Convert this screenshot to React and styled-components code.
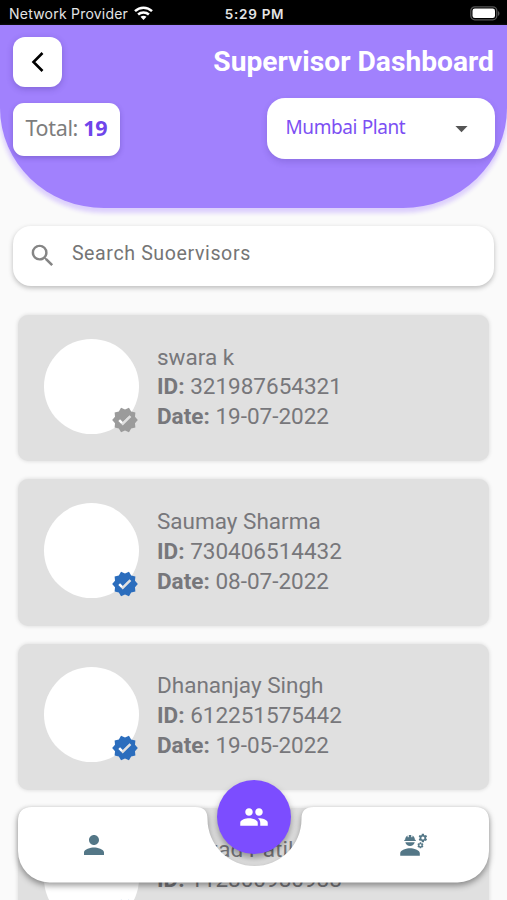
import React from 'react';
import styled, { createGlobalStyle } from 'styled-components';
import { MdVerified, MdPerson, MdPeople, MdEngineering, MdSearch, MdArrowDropDown } from 'react-icons/md';

const GlobalStyle = createGlobalStyle`
    * {
        box-sizing: border-box;
    }

    body {
        margin: 0;
        background: #fafafa;
    }
`;

const Screen = styled.div`
    position: relative;
    width: 507px;
    height: 900px;
    overflow: hidden;
    background: #fafafa;
    color: #77777b;
    font-family: Roboto, sans-serif;
`;

const StatusBar = styled.div`
    display: grid;
    grid-template-columns: 1fr auto 1fr;
    align-items: center;
    height: 25px;
    padding: 2px 7px 0 9px;
    background: black;
    color: #e4e4e4;
    font: 14px/20px Inter, sans-serif;
`;

const Carrier = styled.div`
    display: flex;
    align-items: center;
    gap: 6px;
    letter-spacing: .22px;
    white-space: nowrap;
`;

const Clock = styled.div`
    font-size: 13.5px;
    font-weight: 600;
    letter-spacing: .75px;
`;

const Battery = styled.svg`
    justify-self: end;
`;

const Header = styled.header`
    display: flex;
    flex-direction: column;
    gap: 11px;
    height: 183px;
    padding: 12px 13px 0;
    border-radius: 0 0 104px 104px / 0 0 100px 100px;
    background: #a181fd;
    box-shadow: 0 4px 4px 1px #dccffc;
`;

const HeaderRow = styled.div`
    display: flex;
    justify-content: space-between;
    align-items: ${props => props.$align || 'center'};
`;

const BackButton = styled.button`
    display: flex;
    align-items: center;
    justify-content: center;
    width: 49px;
    height: 50px;
    padding: 0;
    border: none;
    border-radius: 12px;
    background: white;
    box-shadow: 0 2px 6px rgba(60, 40, 130, .3);
`;

const Title = styled.h1`
    margin: 0;
    color: white;
    font-size: 28.2px;
    font-weight: 700;
    line-height: 48px;
    white-space: nowrap;
`;

const Total = styled.div`
    width: 107px;
    height: 53px;
    margin-top: 5px;
    padding-left: 12.5px;
    border-radius: 11px;
    background: white;
    box-shadow: 0 2px 5px rgba(60, 40, 130, .3);
    color: #7d7d7d;
    font: 21.5px/49px 'Noto Sans', sans-serif;
    letter-spacing: -.35px;
    white-space: nowrap;

    & b {
        color: #6f45ea;
    }
`;

const PlantSelect = styled.div`
    display: flex;
    align-items: center;
    justify-content: space-between;
    width: 228px;
    height: 61px;
    margin-right: -1px;
    padding: 0 19px 0 18.5px;
    border-radius: 18px;
    background: white;
    box-shadow: 0 3px 6px rgba(60, 40, 130, .2);
    color: #7c50f3;
    font: 19px/58px 'Noto Sans', sans-serif;
    letter-spacing: -.4px;

    & svg {
        color: #555;
    }

    & span {
        padding-bottom: 3px;
    }
`;

const Search = styled.div`
    display: flex;
    align-items: center;
    gap: 15px;
    width: 481px;
    height: 60px;
    margin: 18px 0 0 13px;
    padding-left: 14.5px;
    border-radius: 18px;
    background: white;
    box-shadow: 0 2px 5px rgba(0, 0, 0, .25);
    color: #757575;
    font-size: 19.6px;
    letter-spacing: .6px;

    & svg {
        color: #858585;
    }

    & span {
        padding-bottom: 5px;
    }
`;

const List = styled.div`
    display: flex;
    flex-direction: column;
    gap: 18px;
    margin: 29px 18px 0;
`;

const Card = styled.div`
    display: flex;
    flex: none;
    align-items: flex-start;
    height: 146.3px;
    padding: 23.5px 26px 0;
    border-radius: 10px;
    background: #e0e0e0;
    box-shadow: 0 0 4px rgba(0, 0, 0, .14);
`;

const Avatar = styled.div`
    position: relative;
    width: 95px;
    height: 95px;
    border-radius: 50%;
    background: white;

    & svg {
        position: absolute;
        right: 0;
        bottom: 0;
        color: ${props => props.$verified ? '#2b6dbd' : '#9b9b9b'};
    }
`;

const Details = styled.div`
    margin: 4px 0 0 18px;
    font-size: 22.5px;
    line-height: 29.9px;
    white-space: nowrap;
`;

const Nav = styled.nav`
    position: absolute;
    left: 18px;
    bottom: 17.5px;
    filter: drop-shadow(0 3px 3px rgba(0, 0, 0, .4));
`;

/* bar outline with the round notch for the middle button */
const NavBar = styled.div`
    display: flex;
    align-items: center;
    justify-content: space-between;
    width: 471px;
    height: 75.5px;
    padding: 0 61px;
    background: white;
    color: #547787;
    clip-path: path('M14 0 H177 C186 0 189.500 4 189.500 12 A47 47 0 0 0 283.500 12 C283.500 4 287 0 296 0 H457 Q471 0 471 14 V44 A31.500 31.500 0 0 1 439.500 75.500 H31.500 A31.500 31.500 0 0 1 0 44 V14 Q0 0 14 0 Z');
`;

const PeopleButton = styled.button`
    position: absolute;
    left: 217px;
    top: 780px;
    display: flex;
    align-items: center;
    justify-content: center;
    width: 74px;
    height: 74px;
    padding: 0;
    border: none;
    border-radius: 50%;
    background: #7c4dff;
    box-shadow: 0 4px 7px rgba(0, 0, 0, .35);
    color: white;
`;

const supervisors = [
    { name: 'swara k', id: '321987654321', date: '19-07-2022', verified: false },
    { name: 'Saumay Sharma', id: '730406514432', date: '08-07-2022', verified: true },
    { name: 'Dhananjay Singh', id: '612251575442', date: '19-05-2022', verified: true },
    { name: 'Shehzad Patil', id: '112800980988', verified: true }
];

const Supervisor = ({ name, id, date, verified }) => (
    <Card>
        <Avatar $verified={verified}>
            <MdVerified size={28} />
        </Avatar>
        <Details>
            <div>{name}</div>
            <div><b>ID:</b> {id}</div>
            {date && <div><b>Date:</b> {date}</div>}
        </Details>
    </Card>
)

const App = () => (
    <Screen>
        <GlobalStyle />
        <StatusBar>
            <Carrier>
                Network Provider
                <svg width="19" height="15" viewBox="0 0 19 15" fill="none" stroke="white" strokeWidth="2.500">
                    <path d="M1 5.200C5.800.6 13.200.6 18 5.200" />
                    <path d="M4.100 8.500c3-2.800 7.800-2.800 10.800 0" />
                    <path d="M6.500 10.800c1.700-1.500 4.300-1.500 6 0l-3 3.200z" fill="white" stroke="none" />
                </svg>
            </Carrier>
            <Clock>5:29 PM</Clock>
            <Battery width="30" height="15" viewBox="0 0 30 15">
                <rect x=".8" y=".8" width="26" height="13" rx="4" fill="none" stroke="#555" strokeWidth="1.300" />
                <rect x="2.500" y="2.500" width="22.500" height="9.500" rx="2.300" fill="white" />
                <path d="M28 5c2 1 2 4 0 5z" fill="#555" />
            </Battery>
        </StatusBar>
        <Header>
            <HeaderRow>
                <BackButton>
                    <svg width="14" height="22" viewBox="0 0 14 22" fill="none" stroke="black" strokeWidth="2.600">
                        <path d="M11.500 2L2.500 11l9 9" />
                    </svg>
                </BackButton>
                <Title>Supervisor Dashboard</Title>
            </HeaderRow>
            <HeaderRow $align="flex-start">
                <Total>Total: <b>19</b></Total>
                <PlantSelect>
                    <span>Mumbai Plant</span>
                    <MdArrowDropDown size={29} />
                </PlantSelect>
            </HeaderRow>
        </Header>
        <Search>
            <MdSearch size={29.4} />
            <span>Search Suoervisors</span>
        </Search>
        <List>
            {supervisors.map(item => <Supervisor key={item.id} {...item} />)}
        </List>
        <Nav>
            <NavBar>
                <MdPerson size={30} />
                <MdEngineering size={29.4} />
            </NavBar>
        </Nav>
        <PeopleButton>
            <MdPeople size={30} />
        </PeopleButton>
    </Screen>
)

export default App;
